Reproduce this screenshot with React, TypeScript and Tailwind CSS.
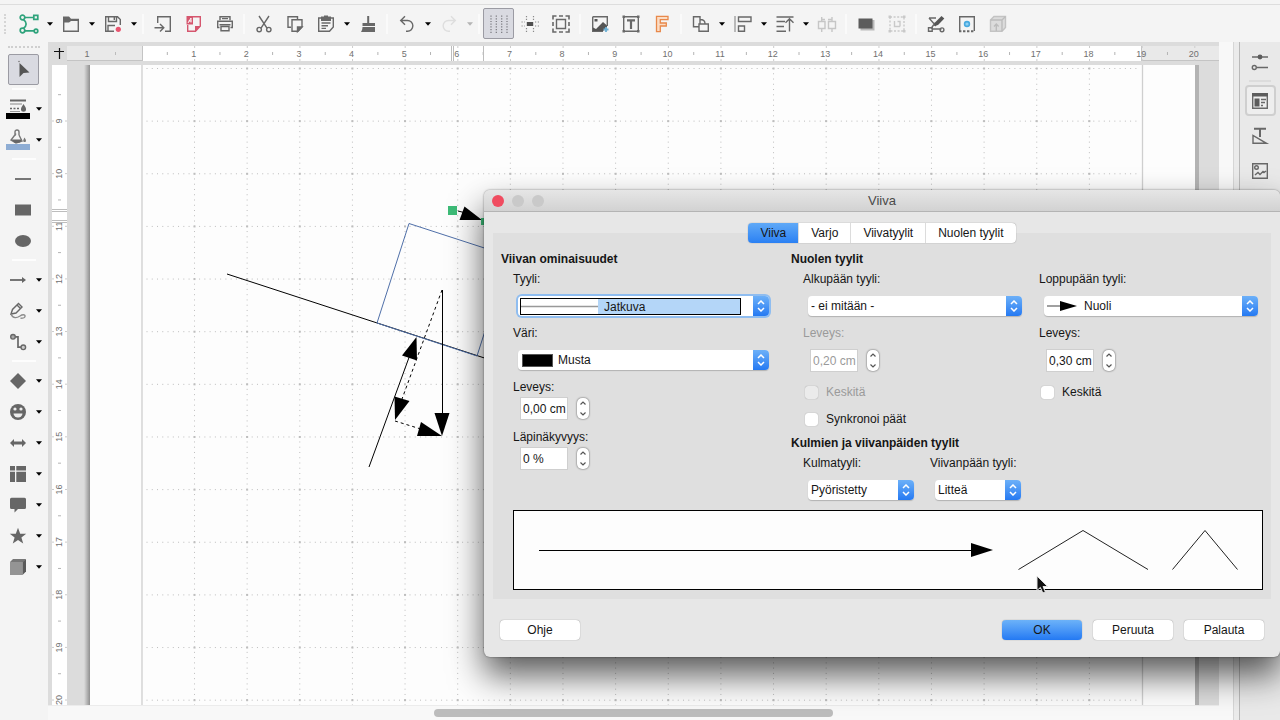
import React from 'react';

const CM = 52.64;

/* ---------- shared bits ---------- */

function Icon({ children }: { children: React.ReactNode }) {
  return (
    <svg
      width="20"
      height="20"
      viewBox="0 0 20 20"
      fill="none"
      stroke="#686868"
      strokeWidth="1.4"
      className="shrink-0"
      aria-hidden="true"
    >
      {children}
    </svg>
  );
}

function ToolButton({ label, active, children }: { label: string; active?: boolean; children: React.ReactNode }) {
  return (
    <button
      type="button"
      aria-label={label}
      className={
        active
          ? 'flex h-[31px] w-[31px] shrink-0 items-center justify-center rounded-xs border border-[#9b9ba3] bg-[#d9dae1]'
          : 'flex h-[31px] w-[31px] shrink-0 items-center justify-center'
      }
    >
      {children}
    </button>
  );
}

function Caret({ label, dim }: { label: string; dim?: boolean }) {
  return (
    <button type="button" aria-label={label} className="flex h-[31px] w-[11px] shrink-0 items-center justify-center">
      <svg width="6" height="4" viewBox="0 0 6 4" aria-hidden="true">
        <path d="M0 0.3H6L3 3.8Z" fill={dim ? '#b5b5b5' : '#000'} />
      </svg>
    </button>
  );
}

function Sep() {
  return <span className="mx-[3px] h-5 w-[2px] shrink-0 bg-[#fafafa]" />;
}

/* ---------- top toolbar ---------- */

function TopToolbar() {
  return (
    <div role="toolbar" className="flex h-[38px] items-center border-t border-[#dddddd] bg-[#f4f4f4] pl-1">
      <span className="mr-[7px] h-5 w-[2px] border-l-2 border-dotted border-[#d5d5d5]" />

      <ToolButton label="Piirros">
        <Icon>
          <g stroke="#2fa37c" strokeWidth="1.7">
            <circle cx="3.5" cy="3.5" r="2.3" />
            <circle cx="3.5" cy="16.5" r="2.3" />
            <path d="M6 3.5H14.5M14.8 1.3H18.8V5.3H14.8ZM4.5 5.8C8 8 8 12 4.5 14.2M6 16.8H15" />
            <circle cx="17" cy="17" r="1.8" />
          </g>
        </Icon>
      </ToolButton>
      <Caret label="Piirroksen valikko" />
      <ToolButton label="Avaa">
        <Icon>
          <path d="M2.7 6V17.3H17.3V6" />
          <path d="M2 8.5V2.5H8L10 4.8H18V7H10L8 8.5Z" fill="#686868" stroke="none" />
        </Icon>
      </ToolButton>
      <Caret label="Avaamisen valikko" />
      <ToolButton label="Tallenna">
        <Icon>
          <path d="M11 17.3H2.7V2.7H14.5L17.3 5.5V11M5.5 2.7V7.5H13.5V2.7M11.3 3.5V6M5 17V11.5H12" />
          <circle cx="15.3" cy="15.3" r="2.6" fill="#e8546f" stroke="none" />
        </Icon>
      </ToolButton>
      <Caret label="Tallennuksen valikko" />
      <Sep />
      <ToolButton label="Vie">
        <Icon>
          <path d="M4.7 9V2.7H17.3V17.3H12M1.5 13.8H10.5M7 10L10.8 13.8L7 17.6" />
        </Icon>
      </ToolButton>
      <ToolButton label="Vie PDF-tiedostoksi">
        <Icon>
          <path d="M9 2.7H16.3V12L11.5 17.3H3.7V11" stroke="#d5566e" />
          <path d="M2.5 2H9V10.5H2.5Z M11 17.8V12H16.8Z" fill="#d5566e" stroke="none" />
          <path d="M4 9L7 4M7 4V8.5M4.5 7H7.5" stroke="#fff" strokeWidth="0.9" />
        </Icon>
      </ToolButton>
      <ToolButton label="Tulosta">
        <Icon>
          <path d="M5 6.3V2.7H15V6.3M6 16.8H14V12.5H6ZM7 4.6H13" />
          <path d="M4.5 13.5H2.7V7.2H17.3V13.5H15.5M4.5 10.8H15.5" />
        </Icon>
      </ToolButton>
      <Sep />
      <ToolButton label="Leikkaa">
        <Icon>
          <path d="M5 2L13 14.2M15 2L7 14.2" />
          <circle cx="5.2" cy="15.6" r="2.2" />
          <circle cx="14.8" cy="15.6" r="2.2" />
        </Icon>
      </ToolButton>
      <ToolButton label="Kopioi">
        <Icon>
          <path d="M6 13.3H3V2.7H12.5V5M7 5.7H17V13L13 17.3H7Z" />
          <path d="M12.5 17.5V13H17Z" fill="#686868" />
        </Icon>
      </ToolButton>
      <ToolButton label="Liitä">
        <Icon>
          <path d="M2.7 4H17.3V13L13.5 17.3H2.7ZM5.5 9H14.5M5.5 11.8H12M5.5 14.4H10" />
          <path d="M5 7V2.5H8V1.5H12V2.5H15V7Z" fill="#686868" stroke="none" />
        </Icon>
      </ToolButton>
      <Caret label="Liittämisen valikko" />
      <ToolButton label="Kopioi muotoilu">
        <Icon>
          <path d="M9.2 2H11.2V9H17V12H4.5V9H9.2Z" fill="#686868" stroke="none" />
          <path d="M4.5 13H17V18H3C4 16.5 4.4 15 4.5 13Z" fill="#686868" stroke="none" />
        </Icon>
      </ToolButton>
      <Sep />
      <ToolButton label="Kumoa">
        <Icon>
          <path d="M4 6.5H10.5A5.3 5.3 0 0 1 10.5 17.2H9M8 2.2L3.7 6.5L8 10.8" />
        </Icon>
      </ToolButton>
      <Caret label="Kumoamisen valikko" />
      <ToolButton label="Tee uudelleen">
        <Icon>
          <path d="M16 6.5H9.5A5.3 5.3 0 0 0 9.5 17.2H11M12 2.2L16.3 6.5L12 10.8" stroke="#dedede" />
        </Icon>
      </ToolButton>
      <Caret label="Uudelleenteon valikko" dim />
      <Sep />
      <ToolButton label="Näytä ruudukko" active>
        <Icon>
          <path
            d="M2 1.5V19M7.3 1.5V19M12.7 1.5V19M18 1.5V19"
            stroke="#77777d"
            strokeWidth="1.2"
            strokeDasharray="1.2 1.5"
          />
        </Icon>
      </ToolButton>
      <ToolButton label="Apuviivat siirrettäessä">
        <Icon>
          <path
            d="M6.5 2V6M13.5 2V6M6.5 14V18M13.5 14V18M1.5 8H5M1.5 12H5M15 8H19M15 12H19"
            stroke="#8a8a8a"
            strokeWidth="1.2"
            strokeDasharray="1.2 1.6"
          />
          <path d="M6.8 8H13.2V12H6.8Z" fill="#4e4e4e" stroke="none" />
        </Icon>
      </ToolButton>
      <ToolButton label="Zoomaus ja panorointi">
        <Icon>
          <path d="M5.5 5.5H14.5V14.5H5.5Z" />
          <path
            d="M2 5.5V2H5.5M8 2H12M14.5 2H18V5.5M18 8V12M18 14.5V18H14.5M12 18H8M5.5 18H2V14.5M2 12V8"
            strokeWidth="1.6"
          />
        </Icon>
      </ToolButton>
      <Sep />
      <ToolButton label="Lisää kuva">
        <Icon>
          <path d="M2.7 2.7H17.3V12M2.7 2.7V17.3H13" />
          <path d="M3 17V13.5L6 15L13 8L17 11.5V14L13 17ZM4.5 5H7.5V7.5H4.5Z" fill="#555" stroke="none" />
          <path d="M16 13V18M13.5 15.5H18.5" stroke="#6db0d4" strokeWidth="1.8" />
        </Icon>
      </ToolButton>
      <ToolButton label="Lisää tekstikehys">
        <Icon>
          <path d="M2.7 2.7H17.3V17.3H2.7Z" />
          <path d="M6 6.3H14M10 6V15" strokeWidth="2.2" />
          <path d="M1.5 1.5H4V4H1.5ZM16 1.5H18.5V4H16ZM1.5 16H4V18.5H1.5ZM16 16H18.5V18.5H16Z" fill="#686868" stroke="none" />
        </Icon>
      </ToolButton>
      <ToolButton label="Lisää Fontwork-teksti">
        <Icon>
          <path d="M4.5 2.3H16V5.6H8.3V9H14.3V12H8.3V17.7H4.5Z" fill="#fbdcc4" stroke="#e8884a" strokeWidth="1.3" />
        </Icon>
      </ToolButton>
      <Sep />
      <ToolButton label="Muunnokset">
        <Icon>
          <path d="M8 12.7H2.5V2.7H9V10M9 5.5C13 5.5 14 7 14 9.5M8 10H17.3V17.3H8Z" />
        </Icon>
      </ToolButton>
      <Caret label="Muunnosten valikko" />
      <ToolButton label="Tasaa">
        <Icon>
          <path d="M2 2V18" stroke="#a0a0a0" />
          <path d="M5.5 3H18V7.5H5.5ZM5.5 12H11.5V17.3H5.5Z" />
        </Icon>
      </ToolButton>
      <Caret label="Tasauksen valikko" />
      <ToolButton label="Järjestä">
        <Icon>
          <path d="M1.5 3H18.5M1.5 7.5H10M1.5 12.5H9M1.5 17.3H11M14.5 17.5V4.5M10.5 8.8L14.5 4.8L18.5 8.8" />
        </Icon>
      </ToolButton>
      <Caret label="Järjestyksen valikko" />
      <ToolButton label="Jaa tasaisesti">
        <Icon>
          <path d="M1.5 7.5H8V14.5H1.5ZM11.5 7.5H18.5V14.5H11.5ZM4.7 3V7M4.7 15V18M15 3V7M15 15V18M5 5.5H8M11 5.5H15" stroke="#c6c6c6" />
        </Icon>
      </ToolButton>
      <Sep />
      <ToolButton label="Varjo">
        <Icon>
          <rect x="4.5" y="6" width="14" height="10.5" fill="#b9b9b9" stroke="none" />
          <rect x="2.5" y="4.5" width="14" height="10" fill="#5c5c5c" stroke="none" />
        </Icon>
      </ToolButton>
      <ToolButton label="Rajaa">
        <Icon>
          <path d="M3 3H17V17H3Z" stroke="#c9c9c9" strokeDasharray="2 1.6" />
          <path d="M7.5 7V12.5H13M10.5 7.5H13V12.5" stroke="#c9c9c9" />
          <path d="M1.5 1.5H4V4H1.5ZM16 1.5H18.5V4H16ZM1.5 16H4V18.5H1.5ZM16 16H18.5V18.5H16Z" fill="#c9c9c9" stroke="none" />
        </Icon>
      </ToolButton>
      <Sep />
      <ToolButton label="Pisteet">
        <Icon>
          <path d="M3 4H10M3 4L10 12M6 15L15.5 15M5 14.5L9 9" />
          <path d="M8 12L9 8.5L15.5 2L18.3 4.5L12 11Z" fill="#555" stroke="none" />
          <path d="M2.5 13.8H6.2V17.3H2.5Z" />
          <circle cx="16" cy="15.8" r="1.9" />
        </Icon>
      </ToolButton>
      <ToolButton label="Liimapisteet">
        <Icon>
          <path d="M2.7 17V2.7H17.3V17" />
          <path d="M2 17.3H18" strokeDasharray="2.4 1.6" strokeWidth="2" />
          <circle cx="10" cy="10" r="2.4" fill="#8fd0f2" stroke="#48a9df" strokeWidth="1.6" />
        </Icon>
      </ToolButton>
      <ToolButton label="Pursotus">
        <Icon>
          <path d="M2.5 6L6 2.5H17.5V13.5L14 17.3H2.5Z" fill="#dcdcdc" stroke="#c3c3c3" />
          <path d="M2.5 6H14V17.3M14 6L17.5 2.5M8.3 17V11M6 12.5L8.3 10L10.6 12.5" stroke="#bcbcbc" />
        </Icon>
      </ToolButton>
    </div>
  );
}

/* ---------- left toolbar ---------- */

function SideSep() {
  return <span className="my-[3px] ml-3 h-[2px] w-6 shrink-0 bg-[#fdfdfd]" />;
}

function ToolRow({ label, children }: { label: string; children: React.ReactNode }) {
  return (
    <div className="flex pl-[2px]">
      <ToolButton label={label}>{children}</ToolButton>
      <Caret label={label + ', valikko'} />
    </div>
  );
}

function LeftToolbar() {
  return (
    <div role="toolbar" aria-orientation="vertical" className="flex w-12 shrink-0 flex-col bg-[#f4f4f4] pt-1">
      <span className="mb-[6px] ml-2 h-[2px] w-8 border-t-2 border-dotted border-[#cfcfcf]" />
      <div className="pl-2">
        <ToolButton label="Valitse" active>
          <Icon>
            <path d="M5.5 3V17L9.5 13L15.5 12.5Z" fill="#555" stroke="none" />
            <circle cx="5" cy="1.5" r="0.8" fill="#777" stroke="none" />
          </Icon>
        </ToolButton>
      </div>
      <SideSep />
      <ToolRow label="Viivan väri">
        <svg width="24" height="22" viewBox="0 0 24 22" className="shrink-0" aria-hidden="true">
          <path d="M4 2.5H20" stroke="#666" strokeWidth="2" />
          <path d="M4 6H16" stroke="#999" strokeWidth="1.2" />
          <path d="M4 10.5H14" stroke="#666" strokeWidth="1.6" strokeDasharray="2 1.5" />
          <path d="M4 13.5H14" stroke="#999" />
          <path d="M17.5 6C19.5 9 20 10 20 11.2A2.5 2.5 0 0 1 15 11.2C15 10 15.5 9 17.5 6Z" fill="#666" />
          <path d="M0 15H24V21H0Z" fill="#000" />
        </svg>
      </ToolRow>
      <ToolRow label="Täyttöväri">
        <svg width="24" height="22" viewBox="0 0 24 22" className="shrink-0" aria-hidden="true">
          <path d="M9 7V3A2 2 0 0 1 13 3V6M10 4.5L5 11L10 14L16 12L13 6" fill="none" stroke="#777" strokeWidth="1.4" />
          <path d="M5 10.5H15.8L14 13.5L9 14Z" fill="#666" />
          <path d="M18.5 8.5C20 11 20.2 11.5 19.8 12.4C19.4 13.3 17.8 13.3 17.4 12.4C17 11.5 17.3 10.8 18.5 8.5Z" fill="#777" />
          <path d="M0 15H24V21H0Z" fill="#8eadd4" />
        </svg>
      </ToolRow>
      <SideSep />
      <div className="flex flex-col pl-[7px]">
        <ToolButton label="Viiva">
          <Icon>
            <path d="M2 10H18" strokeWidth="1.8" />
          </Icon>
        </ToolButton>
        <ToolButton label="Suorakulmio">
          <Icon>
            <path d="M2 4.5H18V15.5H2Z" fill="#666" stroke="none" />
          </Icon>
        </ToolButton>
        <ToolButton label="Ellipsi">
          <Icon>
            <ellipse cx="10" cy="10" rx="8" ry="6" fill="#666" stroke="none" />
          </Icon>
        </ToolButton>
      </div>
      <SideSep />
      <ToolRow label="Viivat ja nuolet">
        <Icon>
          <path d="M2 10H15" strokeWidth="1.8" />
          <path d="M14 7L18 10L14 13Z" fill="#666" stroke="none" />
        </Icon>
      </ToolRow>
      <ToolRow label="Käyrät">
        <Icon>
          <path d="M3 13L4.5 8.5L10.5 2.5L14 6L8 12Z" />
          <path d="M9 4L12.5 7.5" />
          <path d="M3 13C5 18 9 17 12 15C14 13.5 17.5 13 17 15.5C16.8 17 14 17.3 12.5 17.3" stroke="#8b8b8b" />
        </Icon>
      </ToolRow>
      <ToolRow label="Yhdysviivat">
        <Icon>
          <circle cx="5" cy="4.8" r="2.3" fill="#aaa" />
          <circle cx="15.3" cy="15.3" r="2.3" fill="#ccc" />
          <path d="M7.5 4.8H10V15.2H13" strokeWidth="1.7" />
        </Icon>
      </ToolRow>
      <SideSep />
      <ToolRow label="Perusmuodot">
        <Icon>
          <path d="M10 2L18 10L10 18L2 10Z" fill="#666" stroke="none" />
        </Icon>
      </ToolRow>
      <ToolRow label="Symbolimuodot">
        <Icon>
          <circle cx="10" cy="10" r="8" fill="#666" stroke="none" />
          <circle cx="7" cy="7" r="1.6" fill="#ededed" stroke="none" />
          <circle cx="13" cy="7" r="1.6" fill="#ededed" stroke="none" />
          <path d="M5.5 11.5H14.5A4.5 4 0 0 1 5.5 11.5Z" fill="#ededed" stroke="none" />
        </Icon>
      </ToolRow>
      <ToolRow label="Lohkonuolet">
        <Icon>
          <path d="M2 10L6 6V8.5H14V6L18 10L14 14V11.5H6V14Z" fill="#666" stroke="none" />
        </Icon>
      </ToolRow>
      <ToolRow label="Vuokaavio">
        <Icon>
          <path d="M2 2H7V6.4H2ZM8.3 2H18V6.4H8.3ZM2 7.8H7V18H2ZM8.3 7.8H18V18H8.3Z" fill="#666" stroke="none" />
        </Icon>
      </ToolRow>
      <ToolRow label="Kuvatekstit">
        <Icon>
          <path d="M3.5 2.7H16.5A1.5 1.5 0 0 1 18 4.2V12.5A1.5 1.5 0 0 1 16.5 14H10L6.5 17.5V14H3.5A1.5 1.5 0 0 1 2 12.5V4.2A1.5 1.5 0 0 1 3.5 2.7Z" fill="#666" stroke="none" />
        </Icon>
      </ToolRow>
      <ToolRow label="Tähdet">
        <Icon>
          <path d="M10 1.8L12.2 7.7H18.2L13.4 11.4L15.2 17.6L10 13.9L4.8 17.6L6.6 11.4L1.8 7.7H7.8Z" fill="#666" stroke="none" />
        </Icon>
      </ToolRow>
      <ToolRow label="Kolmiulotteiset kappaleet">
        <Icon>
          <path d="M2 5L5 2H18L15 5Z" fill="#777" stroke="none" />
          <path d="M2 5H14.5V18H2Z" fill="#949494" stroke="none" />
          <path d="M14.5 5L18 2V14.5L14.5 18Z" fill="#5a5a5a" stroke="none" />
        </Icon>
      </ToolRow>
    </div>
  );
}

/* ---------- rulers and drawing ---------- */

const topMarks = Array.from({ length: 20 }, (_, i) => i + 1);
const leftMarks = Array.from({ length: 12 }, (_, i) => i + 9);

function TopRuler() {
  return (
    <svg className="h-[15px] min-w-0 flex-1" fontFamily="'Liberation Sans', Arial, sans-serif" fontSize="9" fill="#707070">
      <rect width="100%" height="15" fill="#e9e9e9" />
      <rect x="75" width="999" height="15" fill="#fff" />
      <path d="M0 14.5H75M75.5 0V15M1074.5 0V15M1074 14.5H1152" stroke="#c4c4c4" />
      <text x="20" y="10.5" textAnchor="middle">1</text>
      <path d="M48.5 6V9" stroke="#bbb" />
      {topMarks.map((n) => (
        <g key={n}>
          <text x={74 + n * CM} y="10.5" textAnchor="middle">{n}</text>
          <path d={`M${74 + (n - 0.5) * CM} 6V9`} stroke="#b4b4b4" />
          <path d={`M${75 + n * CM} 0V2M${75 + n * CM} 13V15`} stroke="#ccc" />
        </g>
      ))}
      <path d="M384.5 0V15M386.5 0V15M416.5 0V15" stroke="#bdbdbd" />
    </svg>
  );
}

function LeftRuler() {
  return (
    <svg className="h-full w-[15px] shrink-0" fontFamily="'Liberation Sans', Arial, sans-serif" fontSize="9" fill="#707070">
      <rect width="15" height="100%" fill="#fff" />
      {leftMarks.map((n) => {
        const y = 56 + (n - 9) * CM;
        return (
          <g key={n}>
            <text transform={`translate(10 ${y}) rotate(-90)`} textAnchor="middle">{n}</text>
            <path d={`M6 ${y - CM / 2}H9`} stroke="#b4b4b4" />
            <path d={`M0 ${y}H2M13 ${y}H15`} stroke="#ccc" />
          </g>
        );
      })}
      <path d="M0 144.5H15M0 146.5H15M0 155.5H15M0 157.5H15" stroke="#bdbdbd" />
    </svg>
  );
}

function Drawing() {
  const cols = Array.from({ length: 18 }, (_, i) => 194.5 + i * CM);
  const rows = Array.from({ length: 13 }, (_, i) => 68.5 + i * CM);
  return (
    <svg className="h-full min-w-0 flex-1" role="img" aria-label="Piirros">
      <defs>
        <linearGradient id="edge" x1="0" x2="1">
          <stop offset="0" stopColor="#dcdcdc" />
          <stop offset="1" stopColor="#8f8f8f" />
        </linearGradient>
      </defs>
      <g transform="translate(-67 -65)">
        <rect x="84" y="65" width="6" height="100%" fill="url(#edge)" />
        <rect x="1195" y="65" width="4" height="100%" fill="#b3b3b3" />
        <rect x="90" y="65" width="1105" height="100%" fill="#fdfdfd" />
        <path d="M142 65V900M1142.5 65V900" stroke="#cfcfcf" strokeWidth="1.3" />

        {/* grid */}
        {cols.map((x) => (
          <path key={x} d={`M${x} 68V705`} stroke="#bdbdbd" strokeDasharray="1 4.26" />
        ))}
        {rows.map((y) => (
          <path key={y} d={`M146.5 ${y}H1140`} stroke="#bdbdbd" strokeDasharray="1 4.26" />
        ))}
        {rows.map((y) =>
          cols.map((x) => <rect key={x + '-' + y} x={x - 1} y={y - 1} width="2" height="2" fill="#bdbdbd" />)
        )}

        {/* slope, box and force arrows */}
        <g fill="none" stroke="#000">
          <path d="M227 274L509 366" />
          <path d="M409 223.5L377 323L477 356L509 256Z" stroke="#4f6fa8" />
          <path d="M442.5 290V420M369 467L411 352M458 211L470 214" />
          <path d="M442 290L402 399M395 421L424 430" strokeDasharray="3 3" />
        </g>
        <g fill="#000">
          <path d="M434.5 413H449.5L442 436Z" />
          <path d="M416.5 337L402 355.5L417 360.5Z" />
          <path d="M394.5 396.5L409.5 401L395 420Z" />
          <path d="M421 422L417 436H442Z" />
          <path d="M464.5 206.5L459.5 220H482Z" />
        </g>
        <path d="M448 206H457V215H448ZM481 218H490V225H481Z" fill="#3dbb77" />
      </g>
    </svg>
  );
}

function Workspace() {
  return (
    <main className="flex min-w-0 flex-1 flex-col bg-[#dcdcdc]">
      <div className="flex h-[23px] shrink-0 items-center">
        <svg width="19" height="15" viewBox="0 0 19 15" className="shrink-0" aria-hidden="true">
          <path d="M6 5.5H16M11.5 2V13" stroke="#111" strokeWidth="1.2" />
        </svg>
        <TopRuler />
      </div>
      <div className="flex min-h-0 flex-1 pl-1">
        <LeftRuler />
        <Drawing />
      </div>
      <div className="flex h-[15px] shrink-0 items-center border-t border-[#ececec] bg-[#f8f8f8]">
        <div className="ml-[33%] h-2 w-[34%] rounded-full bg-[#bcbcbc]" />
      </div>
    </main>
  );
}

function Sidebar() {
  return (
    <aside className="flex w-10 shrink-0 flex-col items-center bg-[#e9e9e9] pt-1">
      <ToolButton label="Sivupalkin asetukset">
        <Icon>
          <path d="M2 5H18M7 15.5H18" />
          <circle cx="10" cy="5" r="2.4" fill="#5c5c5c" stroke="none" />
          <circle cx="4.3" cy="15.5" r="2" />
        </Icon>
      </ToolButton>
      <span className="my-[3px] h-[2px] w-[22px] bg-[#dcdcdc]" />
      <button type="button" aria-label="Ominaisuudet" className="flex h-[31px] w-[31px] items-center justify-center rounded-sm border-2 border-[#cfcfcf] bg-[#eeeeee]">
        <Icon>
          <path d="M2.7 3H17.3V17.3H2.7Z" />
          <path d="M2 2H18V5.5H2ZM4.5 7.5H9.5V15.5H4.5Z" fill="#5c5c5c" stroke="none" />
          <path d="M11 8.5H16M11 11.5H15M11 14.5H13" />
        </Icon>
      </button>
      <div className="mt-1 flex flex-col gap-1">
        <ToolButton label="Muodot">
          <Icon>
            <path d="M4 2.7H16M10 2.7V11" strokeWidth="2" />
            <path d="M3 9.5V17.3H16.5Z" />
          </Icon>
        </ToolButton>
        <ToolButton label="Galleria">
          <Icon>
            <path d="M2.7 2.7H17.3V17.3H2.7ZM5 14L8 11.5L10 13.5L13 10.5L14 11.5L16 10" />
            <circle cx="6.5" cy="6.5" r="1.8" />
          </Icon>
        </ToolButton>
      </div>
    </aside>
  );
}

/* ---------- dialog ---------- */

function Cap() {
  return (
    <span className="pointer-events-none flex h-full w-4 shrink-0 items-center justify-center rounded-r-sm bg-linear-to-b from-[#6cb0f8] to-[#2479f2]">
      <svg width="8" height="12" viewBox="0 0 8 12" fill="none" stroke="#fff" strokeWidth="1.5" aria-hidden="true">
        <path d="M1 4L4 1L7 4M1 8L4 11L7 8" />
      </svg>
    </span>
  );
}

function Combo({ id, value, width, swatch }: { id: string; value: string; width: string; swatch?: React.ReactNode }) {
  return (
    <div className={`${width} flex h-5 items-center rounded-sm bg-white shadow-[0_1px_1px_rgba(0,0,0,0.2)]`}>
      {swatch}
      <select id={id} className="h-5 min-w-0 flex-1 appearance-none bg-transparent pl-[3px] outline-none">
        <option>{value}</option>
      </select>
      <Cap />
    </div>
  );
}

function Spin({ id, value, disabled }: { id: string; value: string; disabled?: boolean }) {
  return (
    <div className="flex items-center gap-[9px] pl-[7px]">
      <input
        id={id}
        type="text"
        defaultValue={value}
        disabled={disabled}
        className="h-[23px] w-12 border border-[#cfcfcf] bg-white pl-[2px] outline-none disabled:text-[#9a9a9a]"
      />
      <div className="flex h-[21px] w-3 flex-col rounded-[5px] bg-white shadow-[0_0_2px_rgba(0,0,0,0.7)]">
        <button type="button" aria-label="Suurenna arvoa" className="flex flex-1 items-center justify-center">
          <svg width="6" height="4" viewBox="0 0 6 4" fill="none" stroke="#555" strokeWidth="1.2" aria-hidden="true">
            <path d="M0.5 3.5L3 1L5.5 3.5" />
          </svg>
        </button>
        <button type="button" aria-label="Pienennä arvoa" className="flex flex-1 items-center justify-center">
          <svg width="6" height="4" viewBox="0 0 6 4" fill="none" stroke="#555" strokeWidth="1.2" aria-hidden="true">
            <path d="M0.5 0.5L3 3L5.5 0.5" />
          </svg>
        </button>
      </div>
    </div>
  );
}

function Check({ id, label, disabled }: { id: string; label: string; disabled?: boolean }) {
  return (
    <div className="flex h-4 items-center gap-2 pl-[2px]">
      <input
        id={id}
        type="checkbox"
        disabled={disabled}
        className="h-[13px] w-[13px] appearance-none rounded-[3px] bg-white shadow-[0_0_1px_rgba(0,0,0,0.4)] disabled:bg-[#ebebeb]"
      />
      <label htmlFor={id} className={disabled ? 'text-[#9a9a9a]' : ''}>{label}</label>
    </div>
  );
}

const tabs = ['Viiva', 'Varjo', 'Viivatyylit', 'Nuolen tyylit'];
const plainButton = 'h-5 w-20 rounded-sm bg-white shadow-[0_0_1px_rgba(0,0,0,0.5)]';

function LineDialog() {
  return (
    <div
      role="dialog"
      aria-labelledby="dialog-title"
      className="absolute top-[190px] right-0 left-[484px] rounded-md bg-[#e7e7e7] text-xs leading-4 text-[#161616] shadow-[0_0_2px_rgba(0,0,0,0.5),0_18px_34px_rgba(0,0,0,0.65)]"
    >
      <div className="flex h-[22px] items-center rounded-t-md border-b border-[#b4b4b4] bg-linear-to-b from-[#e6e6e6] to-[#d2d2d2] px-2">
        <div className="flex flex-1 gap-2">
          <button type="button" aria-label="Sulje" className="h-3 w-3 rounded-full bg-[#f04c60]" />
          <button type="button" aria-label="Pienennä" className="h-3 w-3 rounded-full bg-[#c9c9c9]" />
          <button type="button" aria-label="Suurenna" className="h-3 w-3 rounded-full bg-[#c9c9c9]" />
        </div>
        <h1 id="dialog-title" className="text-[13px] text-[#4a4a4a]">Viiva</h1>
        <div className="flex-1" />
      </div>

      <div className="px-[9px] pt-[11px]">
        <div role="tablist" className="relative mx-auto flex h-5 w-fit rounded-sm bg-white shadow-[0_0_1px_rgba(0,0,0,0.5)]">
          {tabs.map((t, i) => (
            <button
              key={t}
              type="button"
              role="tab"
              aria-selected={i === 0}
              className={
                i === 0
                  ? 'rounded-l-sm bg-linear-to-b from-[#5fa9f7] to-[#2a80f3] px-3'
                  : 'border-l border-[#dcdcdc] px-3'
              }
            >
              {t}
            </button>
          ))}
        </div>

        <div className="-mt-[10px] bg-[#dfdfdf] px-2 pt-[18px] pb-[9px]">
          <div className="flex">
            <section className="w-[290px] shrink-0">
              <h2 className="font-bold">Viivan ominaisuudet</h2>
              <div className="flex flex-col pt-1 pl-3">
                <label htmlFor="style">Tyyli:</label>
                <div className="mt-[9px] ml-[5px] flex h-5 w-[251px] items-center rounded-sm bg-white pl-[2px] ring-2 ring-[#8fbdf0]">
                  <div className="flex h-[17px] flex-1 items-center border border-black">
                    <svg width="77" height="15" aria-hidden="true">
                      <path d="M0 7.5H77" stroke="#999" strokeWidth="1.5" />
                    </svg>
                    <select id="style" className="h-full min-w-0 flex-1 appearance-none bg-[#b4d6f8] pl-[6px] outline-none">
                      <option>Jatkuva</option>
                    </select>
                  </div>
                  <span className="w-3" />
                  <Cap />
                </div>

                <label htmlFor="color" className="mt-[9px]">Väri:</label>
                <div className="mt-[9px] pl-[5px]">
                  <Combo
                    id="color"
                    value="Musta"
                    width="w-[251px]"
                    swatch={<span className="mr-[2px] ml-1 h-[13px] w-[31px] border border-[#555] bg-black" />}
                  />
                </div>

                <label htmlFor="width" className="mt-[9px] mb-[2px]">Leveys:</label>
                <Spin id="width" value="0,00 cm" />
                <label htmlFor="transparency" className="mt-[9px] mb-[2px]">Läpinäkyvyys:</label>
                <Spin id="transparency" value="0 %" />
              </div>
            </section>

            <section className="min-w-0 flex-1">
              <h2 className="font-bold">Nuolen tyylit</h2>
              <div className="flex pt-1 pl-3">
                <div className="flex w-[236px] shrink-0 flex-col">
                  <label htmlFor="start-style">Alkupään tyyli:</label>
                  <div className="mt-[9px] pl-[5px]">
                    <Combo id="start-style" value="- ei mitään -" width="w-[214px]" />
                  </div>
                  <label htmlFor="start-width" className="mt-[9px] mb-2 text-[#9a9a9a]">Leveys:</label>
                  <Spin id="start-width" value="0,20 cm" disabled />
                  <div className="mt-3 flex flex-col gap-[11px]">
                    <Check id="start-center" label="Keskitä" disabled />
                    <Check id="sync" label="Synkronoi päät" />
                  </div>
                </div>
                <div className="flex flex-col">
                  <label htmlFor="end-style">Loppupään tyyli:</label>
                  <div className="mt-[9px] pl-[5px]">
                    <Combo
                      id="end-style"
                      value="Nuoli"
                      width="w-[214px]"
                      swatch={
                        <svg width="34" height="12" viewBox="0 0 34 12" className="mr-px ml-[2px]" aria-hidden="true">
                          <path d="M1 6H16" stroke="#777" strokeWidth="1.4" />
                          <path d="M14 1V11L31 6Z" fill="#000" />
                        </svg>
                      }
                    />
                  </div>
                  <label htmlFor="end-width" className="mt-[9px] mb-2">Leveys:</label>
                  <Spin id="end-width" value="0,30 cm" />
                  <div className="mt-3">
                    <Check id="end-center" label="Keskitä" />
                  </div>
                </div>
              </div>

              <h2 className="mt-2 font-bold">Kulmien ja viivanpäiden tyylit</h2>
              <div className="flex pt-1 pl-3">
                <div className="flex w-[127px] flex-col">
                  <label htmlFor="corner">Kulmatyyli:</label>
                  <div className="mt-[9px] pl-[5px]">
                    <Combo id="corner" value="Pyöristetty" width="w-[106px]" />
                  </div>
                </div>
                <div className="flex flex-col">
                  <label htmlFor="cap">Viivanpään tyyli:</label>
                  <div className="mt-[9px] pl-[5px]">
                    <Combo id="cap" value="Litteä" width="w-[86px]" />
                  </div>
                </div>
              </div>
            </section>
          </div>

          {/* line preview */}
          <div className="mt-[10px] ml-3 h-20 border border-black bg-[#fdfdfd]">
            <svg className="h-full w-full" role="img" aria-label="Esikatselu">
              <path d="M25 39.5H460" stroke="#000" strokeWidth="1.2" />
              <path d="M457 32V46L479 39Z" fill="#000" />
              <path d="M504.5 58.5L569 19.5L634 58.5M658.5 58.5L691 19.5L723.5 58.5" fill="none" stroke="#222" />
            </svg>
          </div>
        </div>
      </div>

      <div className="flex gap-[11px] px-4 pt-[21px] pb-[17px]">
        <button type="button" className={plainButton}>Ohje</button>
        <span className="flex-1" />
        <button type="button" className="h-5 w-20 rounded-sm bg-linear-to-b from-[#6cb2f8] to-[#2379f3] shadow-[0_0_1px_rgba(0,0,0,0.5)]">
          OK
        </button>
        <button type="button" className={plainButton}>Peruuta</button>
        <button type="button" className={plainButton}>Palauta</button>
      </div>
    </div>
  );
}

export default function App() {
  return (
    <div className="relative flex h-screen w-full flex-col overflow-hidden bg-[#f4f4f4] pt-1 font-['Liberation_Sans',Arial,sans-serif]">
      <TopToolbar />
      <div className="flex min-h-0 flex-1">
        <LeftToolbar />
        <Workspace />
        <div className="w-[14px] shrink-0 bg-[#f8f8f8]" />
        <div className="w-[7px] shrink-0 border-r border-l border-r-[#b9b9b9] border-l-[#d6d6d6] bg-[#ebebeb]" />
        <Sidebar />
      </div>

      <LineDialog />

      {/* mouse pointer */}
      <svg width="14" height="20" viewBox="0 0 14 20" className="pointer-events-none absolute top-[575px] left-[1036px]" aria-hidden="true">
        <path d="M1 1V15.5L4.4 12.4L6.8 18L9.4 16.9L7 11.5H11.6Z" fill="#111" stroke="#e4e4e4" />
      </svg>
    </div>
  );
}
